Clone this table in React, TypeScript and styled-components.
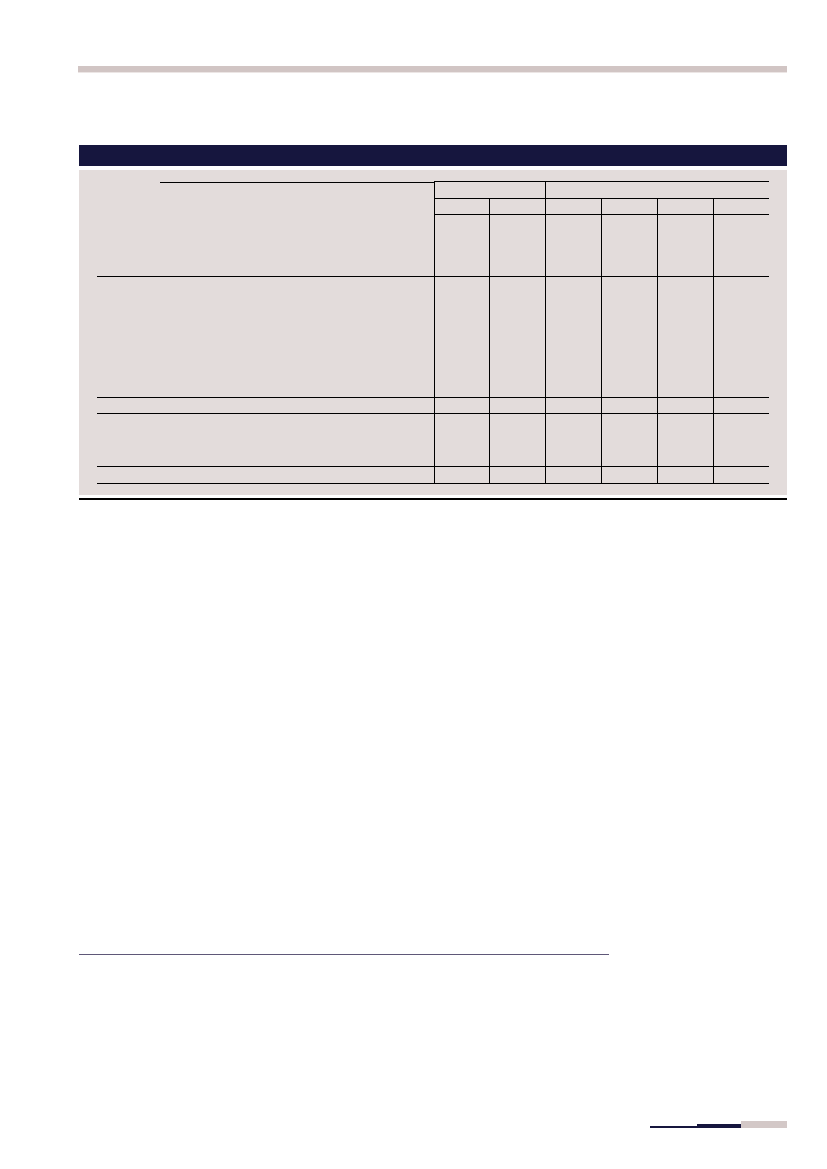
import React from "react";
import styled, { createGlobalStyle } from "styled-components";

const Global = createGlobalStyle`
  html, body { margin: 0; padding: 0; background: #ffffff; }
  body { font-family: "Liberation Sans", Arial, sans-serif; }
`;

const Page = styled.div`
  width: 827px;
  height: 1169px;
  box-sizing: border-box;
  padding: 66px 40px 0 79px;
  display: flex;
  flex-direction: column;
`;

const TopBar = styled.div`
  height: 6px;
  background: #d1c5c4;
  margin-left: -1px;
  border-bottom: 1px solid #ece6e5;
`;

const TitleBar = styled.div`
  margin-top: 72px;
  height: 21px;
  background: #16163e;
`;

const Panel = styled.div`
  margin-top: 4px;
  height: 325px;
  box-sizing: border-box;
  background: #e3dcdb;
  padding: 11px 18px 0 18px;
`;

const Table = styled.table`
  width: 100%;
  border-collapse: collapse;
  table-layout: fixed;
`;

const Row = styled.tr<{ $h: number }>`
  height: ${(p) => p.$h}px;
`;

const LabelHead = styled.td`
  padding: 0;
  vertical-align: top;
  border-right: 1px solid #000;
  border-bottom: 1px solid #000;
`;

const LabelRule = styled.div`
  margin-left: 63px;
  border-top: 1px solid #000;
`;

const GroupCell = styled.td<{ $divider?: boolean }>`
  padding: 0;
  border-top: 1px solid #000;
  border-bottom: 1px solid #000;
  border-right: ${(p) => (p.$divider ? "1px solid #000" : "none")};
`;

const Cell = styled.td<{ $last?: boolean }>`
  padding: 0;
  border-bottom: 1px solid #000;
  border-right: ${(p) => (p.$last ? "none" : "1px solid #000")};
`;

const LabelCell = styled.td`
  padding: 0;
  border-bottom: 1px solid #000;
  border-right: 1px solid #000;
`;

const BottomRule = styled.div`
  margin-top: 3px;
  height: 2px;
  background: #000;
`;

const FootRule = styled.div`
  margin-top: 454px;
  width: 530px;
  height: 1px;
  background: #5f5878;
`;

const Ornament = styled.div`
  margin-top: 166px;
  display: flex;
  justify-content: flex-end;
  align-items: flex-end;
`;

const OrnPart = styled.div<{ $w: number; $h: number; $c: string }>`
  width: ${(p) => p.$w}px;
  height: ${(p) => p.$h}px;
  background: ${(p) => p.$c};
`;

const bodyRows = [121, 16, 53, 17];

export default function App() {
  return (
    <>
      <Global />
      <Page>
        <TopBar />
        <TitleBar />
        <Panel>
          <Table>
            <colgroup>
              <col style={{ width: "337px" }} />
              <col />
              <col />
              <col />
              <col />
              <col />
              <col />
            </colgroup>
            <tbody>
              <Row $h={17}>
                <LabelHead rowSpan={3}>
                  <LabelRule />
                </LabelHead>
                <GroupCell colSpan={2} $divider />
                <GroupCell colSpan={4} />
              </Row>
              <Row $h={16}>
                {[0, 1, 2, 3, 4, 5].map((i) => (
                  <Cell key={i} $last={i === 5} />
                ))}
              </Row>
              <Row $h={62}>
                {[0, 1, 2, 3, 4, 5].map((i) => (
                  <Cell key={i} $last={i === 5} />
                ))}
              </Row>
              {bodyRows.map((h, r) => (
                <Row key={r} $h={h}>
                  <LabelCell />
                  {[0, 1, 2, 3, 4, 5].map((i) => (
                    <Cell key={i} $last={i === 5} />
                  ))}
                </Row>
              ))}
            </tbody>
          </Table>
        </Panel>
        <BottomRule />
        <FootRule />
        <Ornament>
          <OrnPart $w={47} $h={2} $c="#16163e" />
          <OrnPart $w={44} $h={4} $c="#16163e" />
          <OrnPart $w={46} $h={7} $c="#d3c8c7" />
        </Ornament>
      </Page>
    </>
  );
}
